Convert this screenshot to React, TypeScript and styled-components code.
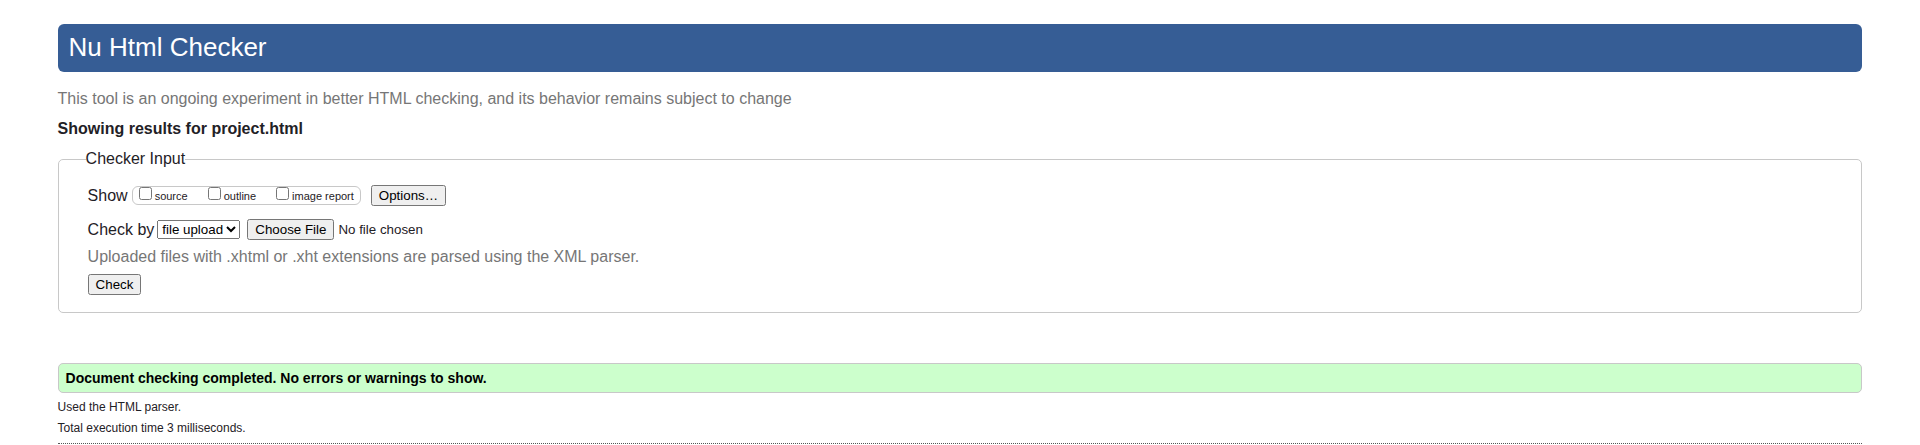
import styled, { createGlobalStyle } from 'styled-components';

const GlobalStyle = createGlobalStyle`
  body {
    margin: 0;
    background: #fff;
    color: #1f2126;
    font-family: Arial, "Liberation Sans", sans-serif;
    font-size: 16px;
    line-height: 20px;
  }
`;

const Page = styled.div`
  padding: 24px 3% 0;
`;

const Banner = styled.header`
  padding: 7px 11px 9px;
  border-radius: 6px;
  background: #365d95;
  color: #fff;
`;

const Title = styled.h1`
  margin: 0;
  font-size: 26px;
  font-weight: normal;
  line-height: 32px;
`;

const Note = styled.p`
  margin: 17px 0 10px;
  color: #767676;
`;

const ResultsHeading = styled.h2`
  margin: 0 0 10px;
  font-size: 16px;
  line-height: 20px;
`;

const InputPanel = styled.fieldset`
  display: block;
  min-width: 0;
  margin: 0;
  padding: 16px 30px 17px 29px;
  border: 1px solid #c8c8c8;
  border-radius: 5px;
`;

const PanelLegend = styled.legend`
  margin-left: -2px;
  padding: 0;
`;

const Row = styled.div`
  display: flex;
  align-items: center;
`;

const ShowRow = styled(Row)`
  margin-bottom: 13px;
`;

const ShowGroup = styled.div`
  display: flex;
  gap: 20px;
  margin: 0 10px 0 4px;
  padding: 0 6px;
  border: 1px solid #c8c8c8;
  border-radius: 6px;
`;

const ShowOption = styled.label`
  display: flex;
  align-items: flex-start;
  gap: 3px;
  font-size: 11px;
  line-height: 17px;
`;

const Tick = styled.input`
  margin: 0;
`;

const OptionText = styled.span`
  padding-top: 1px;
  line-height: 16px;
`;

const SourceSelect = styled.select`
  margin: 0 7px 0 3px;
`;

const Hint = styled.p`
  margin: 7px 0;
  color: #767676;
`;

const PushButton = styled.button`
  display: block;
`;

const Success = styled.p`
  margin: 50px 0 4px;
  padding: 4px 7px;
  border: 1px solid #c8c8c8;
  border-radius: 5px;
  background: #cfc;
  color: #000;
  font-size: 14px;
  font-weight: bold;
`;

const Details = styled.footer`
  padding-bottom: 4px;
  border-bottom: 1px dotted #555;
  font-size: 12px;
`;

const Detail = styled.p`
  margin: 0 0 1px;
`;

const showOptions = ['source', 'outline', 'image report'];

export default function App() {
  return (
    <>
      <GlobalStyle />
      <Page>
        <Banner>
          <Title>Nu Html Checker</Title>
        </Banner>
        <Note>
          This tool is an ongoing experiment in better HTML checking, and its behavior remains subject to change
        </Note>
        <ResultsHeading>Showing results for project.html</ResultsHeading>
        <form onSubmit={(event) => event.preventDefault()}>
          <InputPanel>
            <PanelLegend>Checker Input</PanelLegend>
            <ShowRow>
              <span id="show-label">Show</span>
              <ShowGroup role="group" aria-labelledby="show-label">
                {showOptions.map((name) => (
                  <ShowOption key={name}>
                    <Tick type="checkbox" name={name} />
                    <OptionText>{name}</OptionText>
                  </ShowOption>
                ))}
              </ShowGroup>
              <PushButton type="button">Options…</PushButton>
            </ShowRow>
            <Row>
              <label htmlFor="source-kind">Check by</label>
              <SourceSelect id="source-kind" defaultValue="file upload">
                <option>address</option>
                <option>file upload</option>
                <option>text input</option>
              </SourceSelect>
              <input type="file" aria-label="File to check" />
            </Row>
            <Hint>Uploaded files with .xhtml or .xht extensions are parsed using the XML parser.</Hint>
            <PushButton type="submit">Check</PushButton>
          </InputPanel>
        </form>
        <Success>Document checking completed. No errors or warnings to show.</Success>
        <Details>
          <Detail>Used the HTML parser.</Detail>
          <Detail>Total execution time 3 milliseconds.</Detail>
        </Details>
      </Page>
    </>
  );
}
